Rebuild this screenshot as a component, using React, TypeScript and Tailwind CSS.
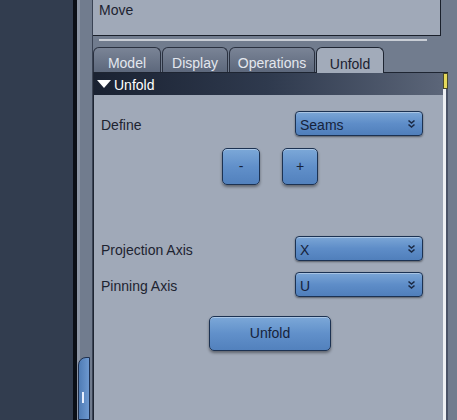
import type { ReactNode } from "react";

const font = { fontFamily: '"Liberation Sans", Arial, sans-serif' };

function Chevrons() {
  return (
    <svg width="9" height="10" viewBox="0 0 9 10" className="shrink-0">
      <path d="M1.5 1.5 L4.5 4 L7.5 1.5 M1.5 5.5 L4.5 8 L7.5 5.5" stroke="#1b2a44" strokeWidth="1.6" fill="none" />
    </svg>
  );
}

function Select({ value }: { value: string }) {
  return (
    <div className="flex items-center w-[128px] h-[25px] pl-[4px] pr-[6px] rounded-[4px] border border-[#1c3252] bg-gradient-to-b from-[#7ba6d6] via-[#5e8dc8] to-[#507fbb] shadow-[0_1px_2px_rgba(0,0,0,0.45),inset_0_1px_0_rgba(255,255,255,0.35)] text-[#16233b] text-[14px]">
      <span className="flex-1 pt-[3px]">{value}</span>
      <Chevrons />
    </div>
  );
}

function Btn({ w, h, children }: { w: string; h: string; children: ReactNode }) {
  return (
    <div className={`${w} ${h} flex items-center justify-center rounded-[5px] border border-[#1c3252] bg-gradient-to-b from-[#7ca8d8] via-[#6190ca] to-[#5281bd] shadow-[0_2px_3px_rgba(0,0,0,0.4),inset_0_1px_0_rgba(255,255,255,0.35)] text-[#16233b] text-[14px]`}>
      {children}
    </div>
  );
}

function Row({ label, value, mt }: { label: string; value: string; mt: string }) {
  return (
    <div className={`flex items-center ${mt}`}>
      <span className="w-[194px] pt-[3px] text-[#1d2330] text-[14px]">{label}</span>
      <Select value={value} />
    </div>
  );
}

function Tab({ label, w, active }: { label: string; w: string; active?: boolean }) {
  return active ? (
    <div className={`${w} h-[26px] -mb-px z-10 flex items-center justify-center rounded-t-[6px] border border-b-0 border-[#1e2532] bg-[#a2abba] text-[#1b2130] text-[14px] pt-[7px]`}>
      {label}
    </div>
  ) : (
    <div className={`${w} h-[25px] flex items-center justify-center rounded-t-[6px] border border-b-0 border-[#2a3140] bg-gradient-to-b from-[#7a8496] to-[#5d687c] text-[#e3e7ee] text-[14px] pt-[6px]`}>
      {label}
    </div>
  );
}

export default function App() {
  return (
    <div className="w-[457px] h-[420px] flex overflow-hidden bg-[#323d4f]" style={font}>
      <div className="w-[73px] shrink-0 bg-[#323d4f]" />
      <div className="w-[4px] shrink-0 bg-[#0b0f16]" />
      <div className="w-[16px] shrink-0 flex flex-col bg-[#717c8e] border-l-[3px] border-[#8c95a4] border-r border-r-[#3a4354]">
        <div className="flex-1" />
        <div className="relative h-[63px] ml-[-2px] mr-[2px] rounded-tl-[8px] border border-[#1f3150] bg-gradient-to-r from-[#4f7cb5] to-[#6d98cf]">
          <div className="absolute left-[3px] top-[34px] w-[2px] h-[11px] bg-[#e8f0ff]" />
        </div>
      </div>
      <div className="flex-1 flex flex-col bg-[#717c8e]">
        <div className="h-[36px] w-[348px] shrink-0 bg-[#a0a9b8] border-b border-r border-[#1a202b] px-[6px] text-[#1d2330] text-[14px]">
          Move
        </div>
        <div className="h-[2px] w-[328px] ml-[6px] mt-[3px] bg-[#c9ced6]" />
        <div className="flex items-end gap-[1px] mt-[4px] h-[27px]">
          <Tab label="Model" w="w-[68px]" />
          <Tab label="Display" w="w-[66px]" />
          <Tab label="Operations" w="w-[86px]" />
          <Tab label="Unfold" w="w-[68px]" active />
        </div>
        <div className="flex flex-1">
          <div className="w-[350px] flex flex-col border-t border-l border-[#1e2532] bg-[#a0a9b8]">
            <div className="h-[22px] flex items-center gap-[3px] pl-[3px] bg-gradient-to-r from-[#1a2232] via-[#2f3a4e] to-[#5c6679] text-white text-[14px]">
              <svg width="14" height="10" viewBox="0 0 14 10">
                <path d="M0 1 L14 1 L7 9 Z" fill="#ffffff" />
              </svg>
              <span className="pt-[2px]">Unfold</span>
            </div>
            <div className="flex flex-col pl-[7px]">
              <Row label="Define" value="Seams" mt="mt-[16px]" />
              <div className="flex justify-center gap-[22px] mt-[12px] pr-[4px]">
                <Btn w="w-[38px]" h="h-[37px]">-</Btn>
                <Btn w="w-[36px]" h="h-[37px]">+</Btn>
              </div>
              <Row label="Projection Axis" value="X" mt="mt-[51px]" />
              <Row label="Pinning Axis" value="U" mt="mt-[11px]" />
              <div className="flex justify-center mt-[19px] pr-[4px]">
                <Btn w="w-[122px]" h="h-[35px]">Unfold</Btn>
              </div>
            </div>
          </div>
          <div className="w-[5px] flex flex-col border-t border-[#1e2532]">
            <div className="h-[16px] bg-[#e6d95a] border border-[#4a4a2a]" />
            <div className="flex-1 flex">
              <div className="w-[3px] bg-[#eef0f3]" />
              <div className="w-[2px] bg-[#4a5366]" />
            </div>
          </div>
        </div>
      </div>
    </div>
  );
}
